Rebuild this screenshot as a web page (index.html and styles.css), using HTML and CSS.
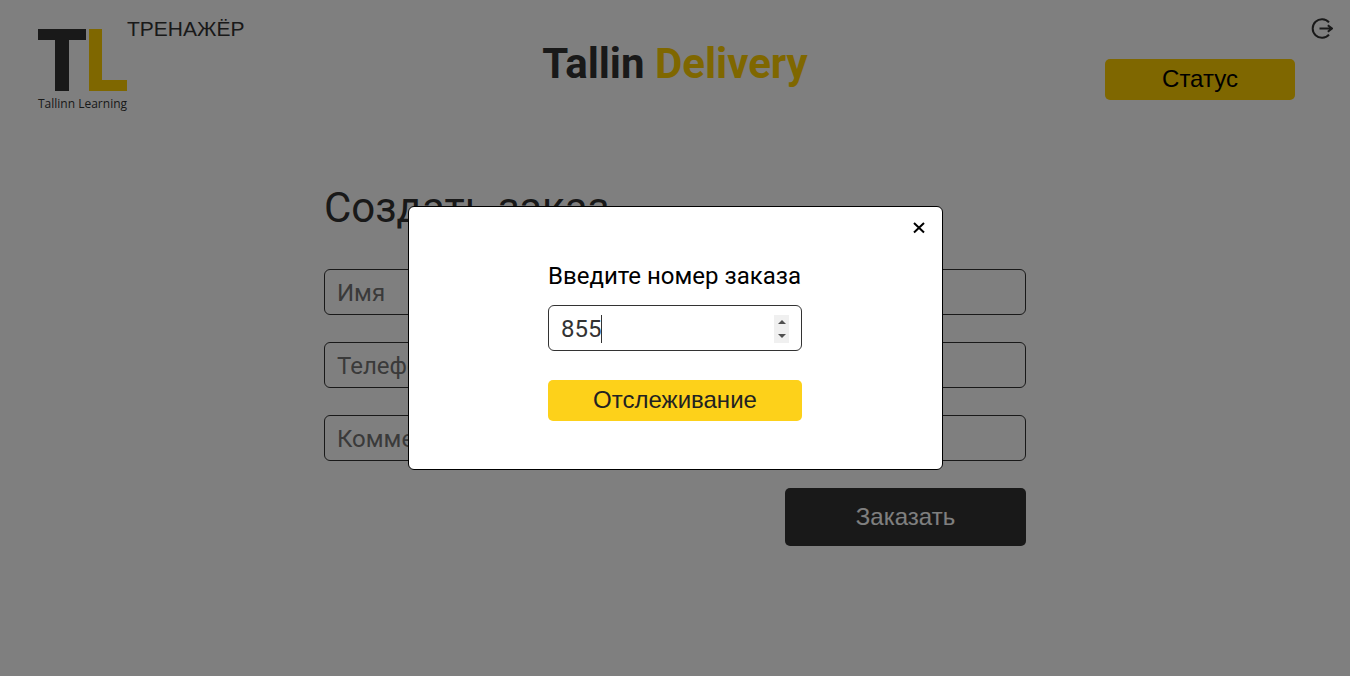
FILE: index.html
```html
<!DOCTYPE html>
<html lang="ru">
<head>
<meta charset="utf-8">
<meta name="viewport" content="width=device-width, initial-scale=1">
<title>Tallin Delivery</title>
<link rel="stylesheet" href="styles.css">
</head>
<body>
<header class="header">
  <div class="brand">
    <a class="brand-link" href="#" aria-label="Tallinn Learning">
      <svg class="brand-mark" viewBox="0 0 89 62" aria-hidden="true">
        <path class="mark-dark" d="M0 0H48V11H31V62H17V11H0Z"/>
        <path class="mark-yellow" d="M51 0H64V51H89V62H51Z"/>
      </svg>
      <span class="brand-caption">Tallinn Learning</span>
    </a>
    <span class="brand-label">ТРЕНАЖЁР</span>
  </div>
  <h1 class="title">Tallin <span class="title-accent">Delivery</span></h1>
  <div class="actions">
    <button class="button status-button" type="button">Статус</button>
    <button class="logout" type="button" aria-label="Выйти">
      <svg class="logout-icon" viewBox="0 0 22 22" aria-hidden="true">
        <path d="M18 4.4A9.3 9.3 0 1 0 18 16.6M8.5 10.5H21M16.8 7.2L21 10.5L16.8 13.8"/>
      </svg>
    </button>
  </div>
</header>
<main class="main">
  <form class="order">
    <h2 class="order-title">Создать заказ</h2>
    <input class="field" type="text" placeholder="Имя" aria-label="Имя">
    <input class="field" type="tel" placeholder="Телефон" aria-label="Телефон">
    <input class="field" type="text" placeholder="Комментарий" aria-label="Комментарий">
    <button class="button order-button" type="button">Заказать</button>
  </form>
</main>
<div class="overlay">
  <div class="modal" role="dialog" aria-modal="true" aria-label="Отслеживание заказа">
    <button class="close" type="button" aria-label="Закрыть">
      <svg class="close-icon" viewBox="0 0 12 12" aria-hidden="true"><path d="M1 1L11 10.5M11 1L1 10.5"/></svg>
    </button>
    <form class="search">
      <label class="search-label" for="order-number">Введите номер заказа</label>
      <div class="number">
        <input class="field number-field" id="order-number" type="number" value="855">
        <span class="caret"></span>
        <span class="spinner">
          <button class="step step-up" type="button" aria-label="Увеличить"></button>
          <button class="step step-down" type="button" aria-label="Уменьшить"></button>
        </span>
      </div>
      <button class="button track-button" type="button">Отслеживание</button>
    </form>
  </div>
</div>
</body>
</html>
```
FILE: styles.css
```css
* {
  box-sizing: border-box;
}

body {
  margin: 0;
  background: #fff;
  color: #333;
  font-family: Roboto, "Liberation Sans", sans-serif;
}

.header {
  display: grid;
  grid-template-columns: 1fr auto 1fr;
  align-items: start;
  padding: 16px 17px 0 38px;
}

.brand {
  display: flex;
  align-items: flex-start;
}

.brand-link {
  display: flex;
  flex-direction: column;
  width: 89px;
  padding-top: 13px;
  color: #333;
  text-decoration: none;
}

.brand-mark {
  width: 89px;
  height: 62px;
}

.mark-dark {
  fill: #333;
}

.mark-yellow {
  fill: #ffce00;
}

.brand-caption {
  margin-top: 4px;
  font: 12px/18px "Open Sans", sans-serif;
  white-space: nowrap;
}

.brand-label {
  font: 21px/26px "Liberation Sans", Arial, sans-serif;
}

.title {
  margin: 0;
  padding: 23px 21px 0 0;
  font-size: 42px;
  line-height: 50px;
  font-weight: 700;
}

.title-accent {
  color: #ffce00;
}

.actions {
  display: flex;
  justify-content: flex-end;
  align-items: flex-start;
  gap: 16px;
}

.button {
  padding: 0 0 2px;
  border: 0;
  border-radius: 5px;
  font: 24px/28px "Liberation Sans", Arial, sans-serif;
  cursor: pointer;
}

.status-button {
  width: 190px;
  height: 41px;
  margin-top: 43px;
  background: #ffce00;
  color: #000;
}

.logout {
  margin-top: 2px;
  padding: 0;
  border: 0;
  background: none;
  cursor: pointer;
}

.logout-icon {
  display: block;
  width: 22px;
  height: 22px;
  fill: none;
  stroke: #333;
  stroke-width: 2;
}

.main {
  display: flex;
  justify-content: center;
  padding-top: 70px;
}

.order {
  display: flex;
  flex-direction: column;
  gap: 27px;
  width: 52%;
}

.order-title {
  margin: 0 0 9px;
  font-size: 42px;
  line-height: 50px;
  font-weight: 400;
}

.field {
  width: 100%;
  height: 46px;
  padding: 2px 12px 0;
  border: 1px solid #333;
  border-radius: 6px;
  background: transparent;
  color: #333;
  font: 24px/28px Roboto, "Liberation Sans", sans-serif;
}

.field::placeholder {
  color: #757575;
}

.order-button {
  align-self: flex-end;
  width: 241px;
  height: 58px;
  padding: 0;
  background: #333;
  color: #fff;
}

.overlay {
  position: fixed;
  inset: 0;
  display: flex;
  align-items: center;
  justify-content: center;
  background: rgba(0, 0, 0, 0.5);
}

.modal {
  position: relative;
  display: flex;
  justify-content: center;
  width: 535px;
  padding: 55px 24px 48px;
  border: 1px solid #000;
  border-radius: 6px;
  background: #fff;
  color: #000;
}

.close {
  position: absolute;
  top: 15px;
  right: 17px;
  padding: 0;
  border: 0;
  background: none;
  cursor: pointer;
}

.close-icon {
  display: block;
  width: 12px;
  height: 12px;
  fill: none;
  stroke: #000;
  stroke-width: 2;
}

.search {
  display: flex;
  flex-direction: column;
  width: 254px;
}

.search-label {
  margin-bottom: 15px;
  font-size: 24px;
  line-height: 28px;
  white-space: nowrap;
}

.number {
  position: relative;
  margin-bottom: 29px;
}

.number-field {
  display: block;
  appearance: textfield;
}

.number-field::-webkit-inner-spin-button {
  appearance: none;
}

.caret {
  position: absolute;
  top: 10px;
  left: 53px;
  width: 1px;
  height: 28px;
  background: #333;
}

.spinner {
  position: absolute;
  top: 10px;
  right: 13px;
  display: flex;
  flex-direction: column;
  width: 15px;
  height: 28px;
  background: #f0f0f0;
}

.step {
  display: flex;
  flex: 1;
  align-items: center;
  justify-content: center;
  padding: 0;
  border: 0;
  background: none;
}

.step::before {
  content: "";
  border: 4px solid transparent;
}

.step-up::before {
  border-top: 0;
  border-bottom-color: #505050;
}

.step-down::before {
  border-bottom: 0;
  border-top-color: #505050;
}

.track-button {
  height: 41px;
  background: #fdd11a;
  color: #222;
}
```
